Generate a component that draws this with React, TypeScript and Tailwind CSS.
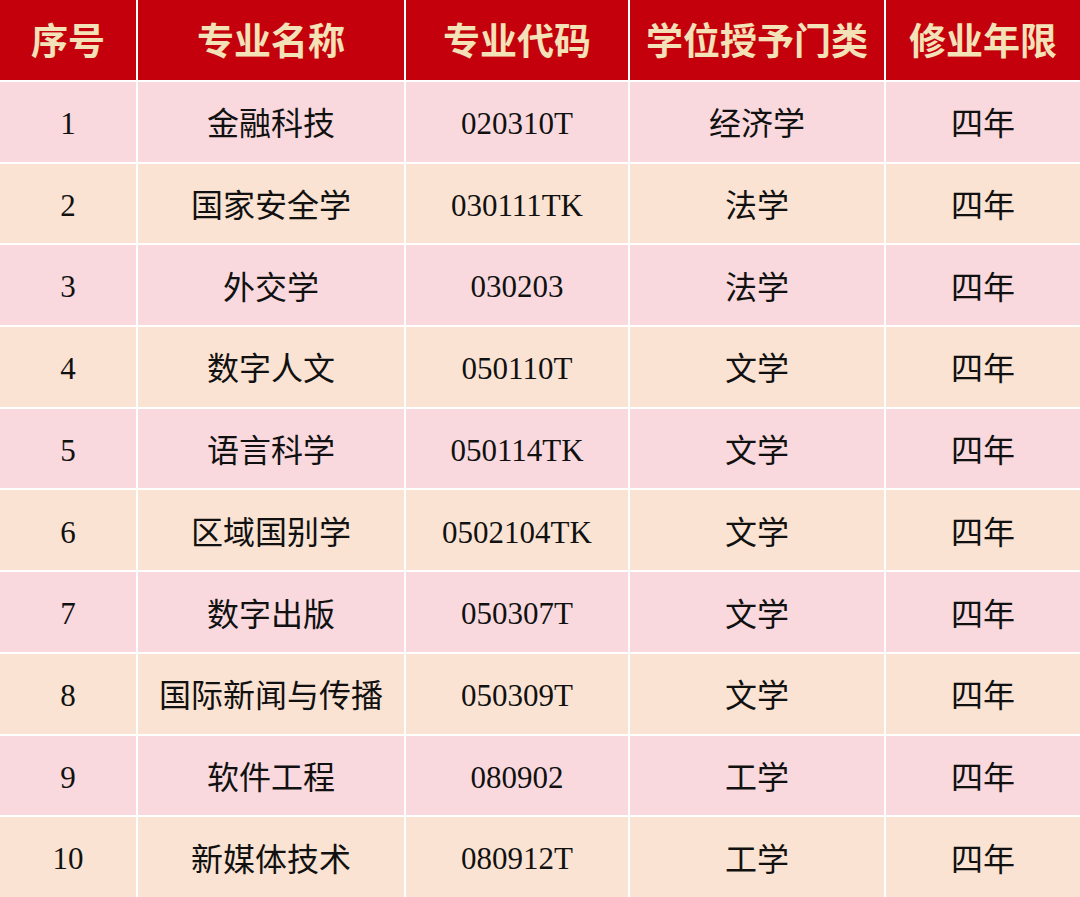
import React from "react";

const rows: [string, string, string, string, string][] = [
  ["1", "金融科技", "020310T", "经济学", "四年"],
  ["2", "国家安全学", "030111TK", "法学", "四年"],
  ["3", "外交学", "030203", "法学", "四年"],
  ["4", "数字人文", "050110T", "文学", "四年"],
  ["5", "语言科学", "050114TK", "文学", "四年"],
  ["6", "区域国别学", "0502104TK", "文学", "四年"],
  ["7", "数字出版", "050307T", "文学", "四年"],
  ["8", "国际新闻与传播", "050309T", "文学", "四年"],
  ["9", "软件工程", "080902", "工学", "四年"],
  ["10", "新媒体技术", "080912T", "工学", "四年"],
];

const headers = ["序号", "专业名称", "专业代码", "学位授予门类", "修业年限"];

export default function App() {
  return (
    <div
      className="w-[1080px] h-[897px] bg-white grid grid-cols-[136px_266px_222px_254px_1fr] grid-rows-[80px_repeat(10,1fr)] gap-[2px] overflow-hidden"
      style={{ fontFamily: '"Liberation Serif", "Noto Sans CJK SC", serif' }}
    >
      {headers.map((h) => (
        <div
          key={h}
          className="bg-[#c4000d] text-[#f3e1b8] text-[37px] font-bold flex items-center justify-center pt-[5px]"
        >
          {h}
        </div>
      ))}
      {rows.map((r, i) =>
        r.map((c, j) => (
          <div
            key={`${i}-${j}`}
            className={`${i % 2 === 0 ? "bg-[#f9d9dd]" : "bg-[#fbe3d3]"} text-[#111] ${j === 0 || j === 2 ? "text-[31px]" : "text-[32px]"} flex items-center justify-center pt-[5px]`}
          >
            {c}
          </div>
        ))
      )}
    </div>
  );
}
